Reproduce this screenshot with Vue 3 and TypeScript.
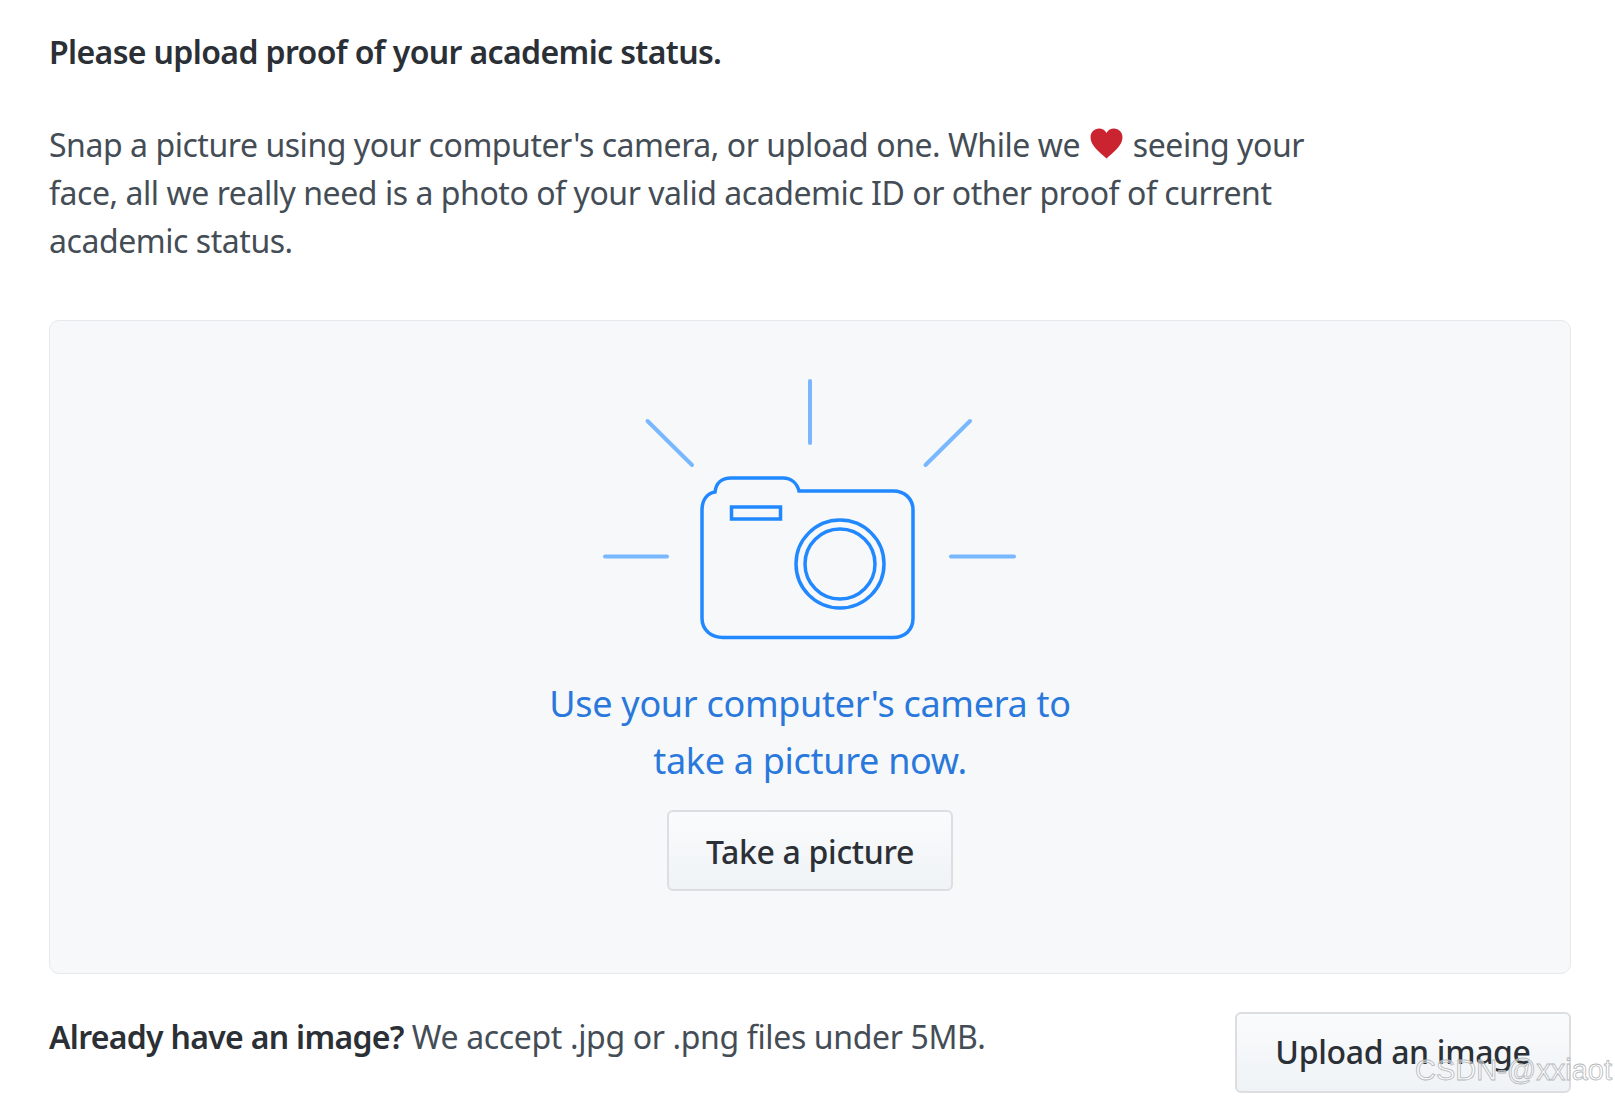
<script setup lang="ts">
const rays: [number, number, number, number][] = [
  [210, 6, 210, 68],
  [47.500, 46, 92, 90],
  [370, 46, 325.500, 90],
  [5, 181.500, 67, 181.500],
  [351, 181.500, 414, 181.500],
]
</script>

<template>
  <main class="page">
    <h1 class="title">Please upload proof of your academic status.</h1>
    <p class="intro">
      Snap a picture using your computer's camera, or upload one. While we
      <svg class="heart" viewBox="0 0 32 30" aria-hidden="true">
        <path d="M16 29.5C10 24 0.5 17.5 0.5 9 0.5 4 4.2 0.5 8.8 0.5c3 0 5.6 1.5 7.2 4.2C17.6 2 20.200.5 23.200.5 27.800.5 31.500 4 31.500 9 31.500 17.500 22 24 16 29.500Z" />
      </svg>
      seeing your face, all we really need is a photo of your valid academic ID or other proof of current
      academic status.
    </p>

    <section class="card">
      <svg class="camera" viewBox="0 0 420 270" aria-hidden="true">
        <g class="rays">
          <line v-for="(r, i) in rays" :key="i" :x1="r[0]" :y1="r[1]" :x2="r[2]" :y2="r[3]" />
        </g>
        <g class="body">
          <path d="M102 135C102 124 108 118 115 117C116 108 122 103 131 103H183C191 103 197 108 199 116H293C305 116 313 124 313 135V243C313 255 305 262.500 293 262.500H123C111 262.500 102 255 102 243Z" />
          <rect x="131.500" y="132" width="49" height="12" />
          <circle cx="240" cy="189" r="44" />
          <circle cx="240" cy="189" r="35" />
        </g>
      </svg>
      <p class="prompt">Use your computer's camera to<br />take a picture now.</p>
      <button class="btn take" type="button">Take a picture</button>
    </section>

    <div class="footer">
      <p class="accept"><strong>Already have an image?</strong> We accept .jpg or .png files under 5MB.</p>
      <button class="btn upload" type="button">Upload an image</button>
    </div>
    <span class="mark">CSDN-@xxiaot</span>
  </main>
</template>

<style>
html, body { background: #fff; }
</style>

<style scoped>
.page {
  position: relative;
  box-sizing: border-box;
  width: 1615px;
  height: 1099px;
  overflow: hidden;
  padding: 28px 44px 0 49px;
  font-family: "Noto Sans", "Open Sans", sans-serif;
  color: #444d56;
  font-size: 32px;
  letter-spacing: -0.45px;
}
.title {
  margin: 0;
  font-size: 32px;
  line-height: 48px;
  font-weight: 600;
  letter-spacing: -0.63px;
  color: #2b3036;
}
.intro {
  margin: 45px 0 0;
  width: 1290px;
  line-height: 48px;
}
.heart {
  width: 33px;
  height: 31px;
  vertical-align: -2px;
  margin: 0 2px;
}
.heart path { fill: #cb2431; }
.card {
  box-sizing: border-box;
  height: 654px;
  margin-top: 55px;
  padding-top: 54px;
  display: flex;
  flex-direction: column;
  align-items: center;
  background: #f6f8fa;
  border: 1px solid #e6e8eb;
  border-radius: 10px;
}
.camera {
  width: 420px;
  height: 270px;
  flex: none;
}
.rays line {
  stroke: #79b8ff;
  stroke-width: 4;
  stroke-linecap: round;
}
.body path, .body rect, .body circle {
  fill: none;
  stroke: #2188ff;
  stroke-width: 3.500;
}
.prompt {
  margin: 30px 0 0;
  text-align: center;
  color: #2a78dc;
  font-size: 36px;
  letter-spacing: -0.3px;
  line-height: 57px;
}
.btn {
  box-sizing: border-box;
  font: inherit;
  font-weight: 500;
  letter-spacing: -0.33px;
  color: #2b3036;
  height: 81px;
  padding: 2px 0 0;
  background: linear-gradient(180deg, #fafbfc, #eff3f6);
  border: 2px solid #dcdee1;
  border-radius: 6px;
}
.take {
  width: 286px;
  margin-top: 21px;
}
.footer {
  margin-top: 38px;
  display: flex;
  justify-content: space-between;
  align-items: flex-start;
}
.accept {
  margin: 1px 0 0;
  line-height: 48px;
  letter-spacing: -0.36px;
}
.accept strong {
  font-weight: 600;
  letter-spacing: -0.7px;
  color: #2b3036;
}
.upload {
  width: 336px;
  padding: 0 0 2px;
}
.mark {
  position: absolute;
  left: 1415px;
  top: 1053px;
  font-family: "Liberation Sans", sans-serif;
  font-size: 29px;
  letter-spacing: 0;
  line-height: 34px;
  white-space: nowrap;
  color: rgba(255, 255, 255, 0.5);
  -webkit-text-stroke: 0.8px #b4b7ba;
}
</style>
